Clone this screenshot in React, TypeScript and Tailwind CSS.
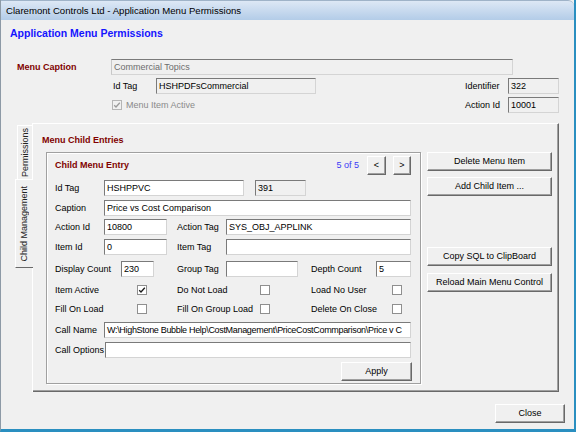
import type { ReactNode } from 'react'

function TextBox({ className = '', gray, dim, children }: { className?: string; gray?: boolean; dim?: boolean; children?: ReactNode }) {
  return (
    <div
      className={`h-[16px] shrink-0 flex items-center px-[2px] overflow-hidden whitespace-nowrap border border-t-[#7a7a7a] border-l-[#7a7a7a] border-r-[#d4d4d4] border-b-[#d4d4d4] ${gray ? 'bg-[#f0f0f0]' : 'bg-white'} ${dim ? 'text-[#6d6d6d]' : 'text-black'} ${className}`}
    >
      {children}
    </div>
  )
}

function Check({ checked, disabled }: { checked?: boolean; disabled?: boolean }) {
  return (
    <div className={`w-[10px] h-[10px] shrink-0 border flex items-center justify-center ${disabled ? 'border-[#b5b5b5] bg-[#f0f0f0]' : 'border-[#8f8f8f] bg-white'}`}>
      {checked && (
        <svg viewBox="0 0 8 8" className="w-[8px] h-[8px]">
          <path d="M1.2 4.2 L3 6 L6.8 1.8" stroke={disabled ? '#9a9a9a' : '#1a1a1a'} strokeWidth="1.3" fill="none" />
        </svg>
      )}
    </div>
  )
}

function Btn({ className = '', children }: { className?: string; children: ReactNode }) {
  return (
    <button
      type="button"
      className={`shrink-0 flex items-center justify-center bg-[#f0f0f0] text-black border border-t-white border-l-white border-r-[#696969] border-b-[#696969] shadow-[inset_-1px_-1px_0_#a0a0a0] ${className}`}
    >
      {children}
    </button>
  )
}

function Label({ className = '', children }: { className?: string; children: ReactNode }) {
  return <div className={`shrink-0 whitespace-nowrap ${className}`}>{children}</div>
}

export default function App() {
  return (
    <div className="w-[576px] h-[432px] overflow-hidden bg-[#f0f0f0] flex flex-col border-l border-l-[#8d9aa6] border-r-2 border-r-[#2a8fc0] border-b-[3px] border-b-[#2a8fc0] font-['Liberation_Sans',Arial,sans-serif] text-[9px] leading-[11px] text-black">
      {/* title bar */}
      <div className="h-[20px] shrink-0 flex items-center pl-[5px] bg-linear-to-b from-[#dde8f5] to-[#b3cce8] border-t border-t-[#9fb3c8] rounded-tr-[6px] text-[9.6px]">
        Claremont Controls Ltd - Application Menu Permissions
      </div>

      <div className="h-[26px] shrink-0 flex items-center pl-[9px] text-[10.5px] font-bold text-[#1414ff]">
        Application Menu Permissions
      </div>

      {/* menu caption */}
      <div className="flex items-center h-[16px] mt-[13px]">
        <Label className="ml-[16px] w-[94px] font-bold text-[#800000]">Menu Caption</Label>
        <TextBox gray dim className="w-[402px] border-l-[#c8c8c8]">Commercial Topics</TextBox>
      </div>

      <div className="flex items-center h-[16px] mt-[3px]">
        <div className="w-[464px] shrink-0 flex items-center">
          <Label className="ml-[112px] w-[43px]">Id Tag</Label>
          <TextBox gray className="w-[160px]">HSHPDFsCommercial</TextBox>
        </div>
        <Label className="w-[43px]">Identifier</Label>
        <TextBox gray className="w-[51px]">322</TextBox>
      </div>

      <div className="flex items-center h-[16px] mt-[3px]">
        <div className="w-[464px] shrink-0 flex items-center">
          <div className="ml-[111px]">
            <Check checked disabled />
          </div>
          <Label className="ml-[4px] text-[#8a8a8a]">Menu Item Active</Label>
        </div>
        <Label className="w-[43px]">Action Id</Label>
        <TextBox gray className="w-[51px]">10001</TextBox>
      </div>

      {/* tab control */}
      <div className="flex ml-[14px] mt-[10px] h-[269px] w-[544px] shrink-0">
        <div className="w-[18px] shrink-0 flex flex-col">
          <div className="h-[56px] pl-[2px] pt-[2px] border-r border-r-white">
            <div className="h-full border-t border-l border-white flex items-center justify-center text-[#222]">
              <span className="[writing-mode:vertical-rl] rotate-180 whitespace-nowrap">Permissions</span>
            </div>
          </div>
          <div className="h-[89px] border-t border-l border-white border-b border-b-[#696969] flex items-center justify-center text-[#222]">
            <span className="[writing-mode:vertical-rl] rotate-180 whitespace-nowrap">Child Management</span>
          </div>
          <div className="flex-1 border-r border-r-white" />
        </div>

        <div className="flex-1 flex flex-col border-t border-t-white border-r border-r-[#696969] border-b border-b-[#696969] shadow-[inset_-1px_-1px_0_#a0a0a0]">
          <div className="pt-[11px] pl-[9px] h-[22px] font-bold text-[#800000]">Menu Child Entries</div>

          <div className="flex ml-[13px] mt-[6px]">
            {/* child menu entry box */}
            <div className="w-[375px] h-[232px] shrink-0 flex flex-col pl-[8px] border border-[#a0a0a0] shadow-[inset_1px_1px_0_#fff,1px_1px_0_#fff]">
              <div className="flex items-center h-[19px] mt-[3px]">
                <Label className="font-bold text-[#800000]">Child Menu Entry</Label>
                <Label className="ml-auto text-[#3b3bf5]">5 of 5</Label>
                <Btn className="ml-[8px] w-[19px] h-[19px]">&lt;</Btn>
                <Btn className="ml-[7px] mr-[9px] w-[18px] h-[19px]">&gt;</Btn>
              </div>

              <div className="flex items-center h-[16px] mt-[5px]">
                <Label className="w-[49px]">Id Tag</Label>
                <TextBox className="w-[140px]">HSHPPVC</TextBox>
                <TextBox gray className="ml-[11px] w-[51px]">391</TextBox>
              </div>

              <div className="flex items-center h-[16px] mt-[4px]">
                <Label className="w-[49px]">Caption</Label>
                <TextBox className="w-[307px]">Price vs Cost Comparison</TextBox>
              </div>

              <div className="flex items-center h-[16px] mt-[3px]">
                <Label className="w-[49px]">Action Id</Label>
                <TextBox className="w-[63px]">10800</TextBox>
                <Label className="ml-[10px] w-[49px]">Action Tag</Label>
                <TextBox className="w-[185px]">SYS_OBJ_APPLINK</TextBox>
              </div>

              <div className="flex items-center h-[16px] mt-[4px]">
                <Label className="w-[49px]">Item Id</Label>
                <TextBox className="w-[63px]">0</TextBox>
                <Label className="ml-[10px] w-[49px]">Item Tag</Label>
                <TextBox className="w-[185px]" />
              </div>

              <div className="flex items-center h-[16px] mt-[6px]">
                <Label className="w-[66px]">Display Count</Label>
                <TextBox className="w-[33px]">230</TextBox>
                <Label className="ml-[23px] w-[49px]">Group Tag</Label>
                <TextBox className="w-[72px]">{''}</TextBox>
                <Label className="ml-[13px] w-[65px]">Depth Count</Label>
                <TextBox className="w-[35px]">5</TextBox>
              </div>

              <div className="flex items-center h-[10px] mt-[8px]">
                <Label className="w-[82px]">Item Active</Label>
                <Check checked />
                <Label className="ml-[30px] w-[83px]">Do Not Load</Label>
                <Check />
                <Label className="ml-[41px] w-[81px]">Load No User</Label>
                <Check />
              </div>

              <div className="flex items-center h-[10px] mt-[9px]">
                <Label className="w-[82px]">Fill On Load</Label>
                <Check />
                <Label className="ml-[30px] w-[83px]">Fill On Group Load</Label>
                <Check />
                <Label className="ml-[41px] w-[81px]">Delete On Close</Label>
                <Check />
              </div>

              <div className="flex items-center h-[16px] mt-[8px]">
                <Label className="w-[49px]">Call Name</Label>
                <TextBox className="w-[307px] tracking-[-0.32px]">W:\HighStone Bubble Help\CostManagement\PriceCostCommparison\Price v C</TextBox>
              </div>

              <div className="flex items-center h-[16px] mt-[4px]">
                <Label className="w-[50px]">Call Options</Label>
                <TextBox className="w-[306px]" />
              </div>

              <div className="flex mt-[4px]">
                <Btn className="ml-[286px] w-[71px] h-[19px]">Apply</Btn>
              </div>
            </div>

            {/* side buttons */}
            <div className="ml-[6px] w-[125px] flex flex-col">
              <Btn className="w-full h-[19px]">Delete Menu Item</Btn>
              <Btn className="w-full h-[19px] mt-[6px]">Add Child Item ...</Btn>
              <Btn className="w-full h-[19px] mt-[51px]">Copy SQL to ClipBoard</Btn>
              <Btn className="w-full h-[19px] mt-[7px]">Reload Main Menu Control</Btn>
            </div>
          </div>
        </div>
      </div>

      <div className="flex mt-[12px]">
        <Btn className="ml-[494px] w-[70px] h-[19px]">Close</Btn>
      </div>
    </div>
  )
}
